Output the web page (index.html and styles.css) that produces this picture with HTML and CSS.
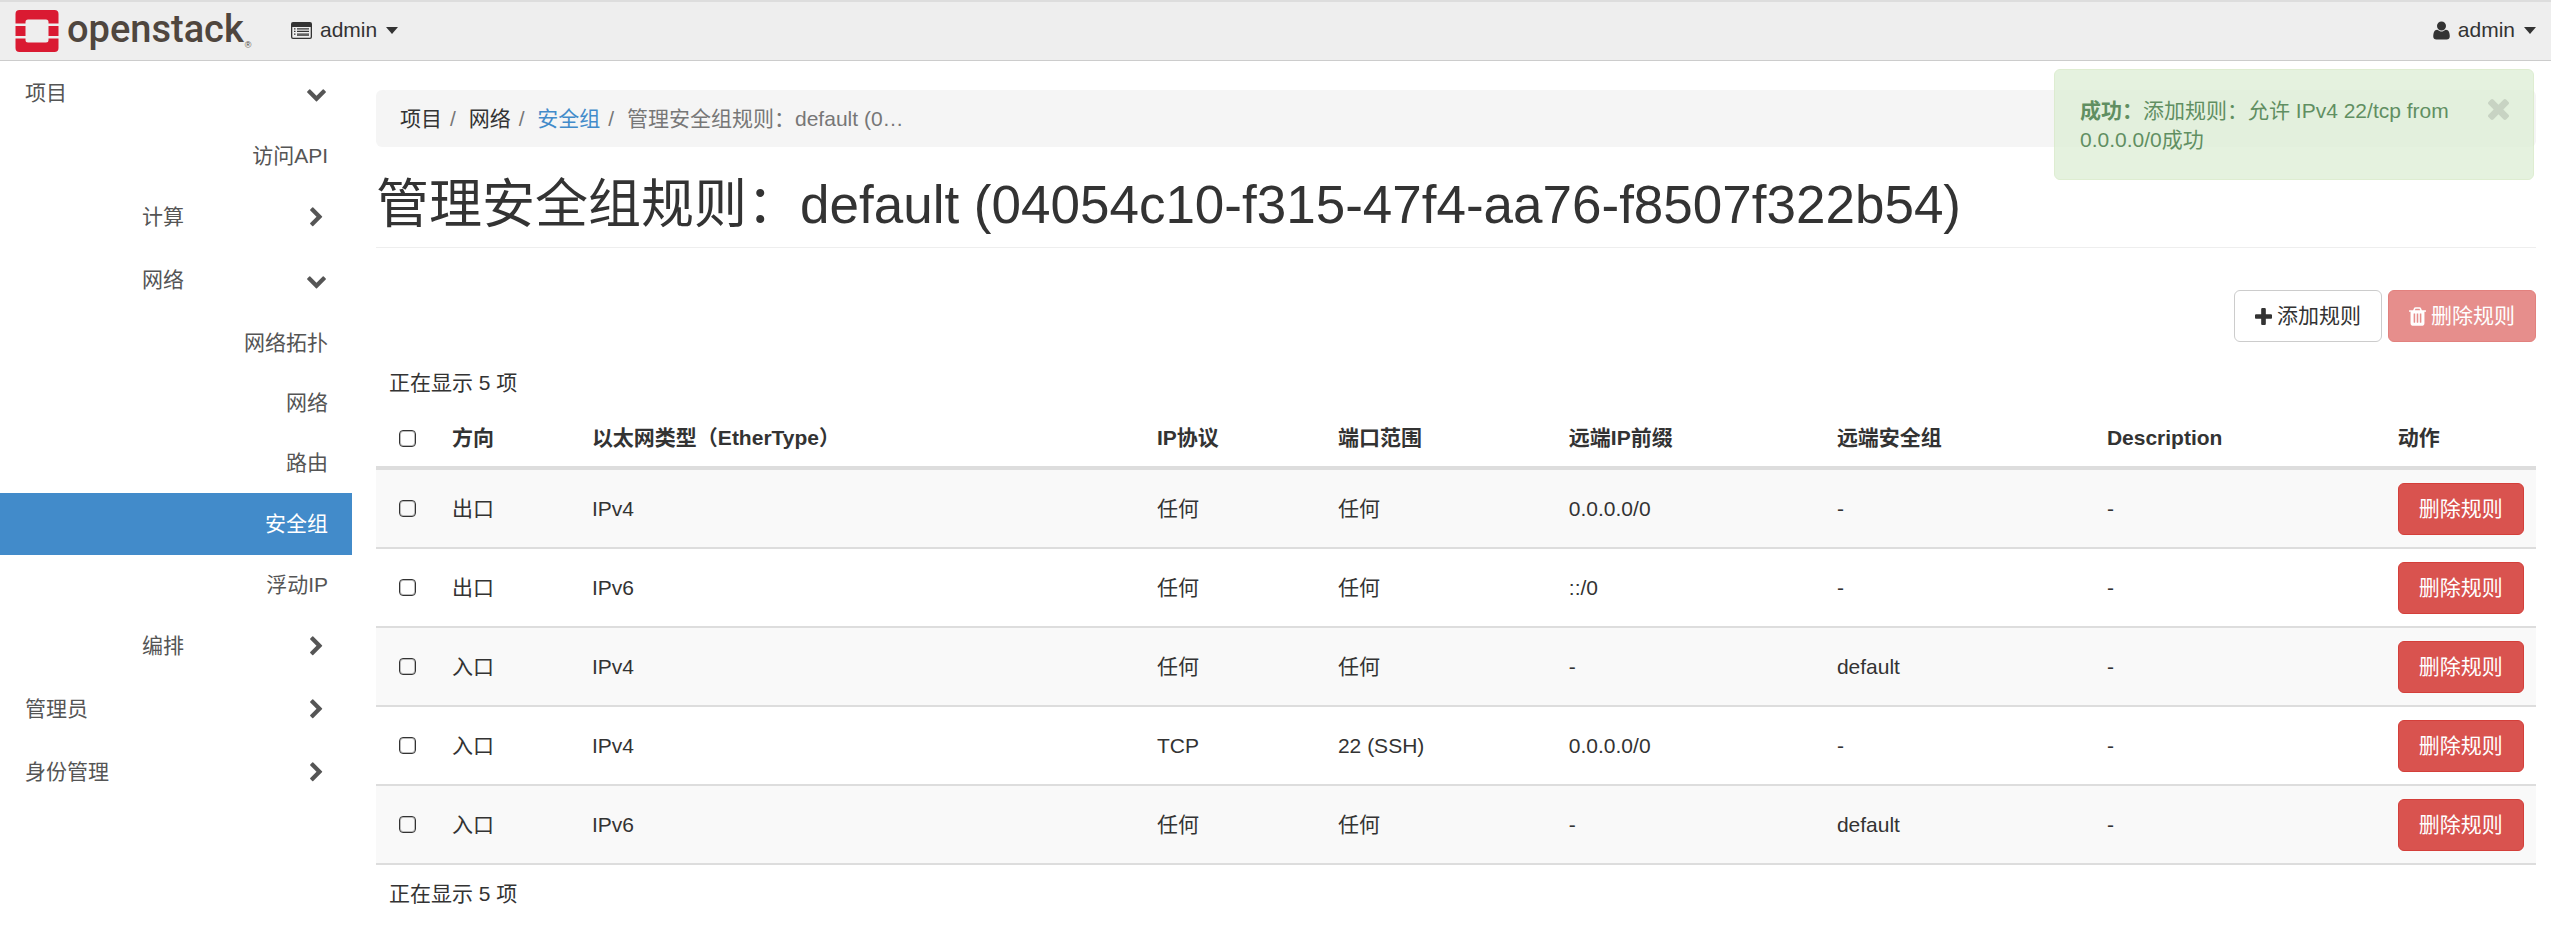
FILE: index.html
```
<!DOCTYPE html>
<html lang="zh-CN">
<head>
<meta charset="utf-8">
<title>管理安全组规则 - OpenStack Dashboard</title>
<link rel="stylesheet" href="styles.css">
</head>
<body>
<svg class="defs" aria-hidden="true">
  <symbol id="down" viewBox="0 0 1792 1792"><path d="M1683 808l-742 741q-19 19-45 19t-45-19l-742-741q-19-19-19-45.500t19-45.500l166-165q19-19 45-19t45 19l531 531 531-531q19-19 45-19t45 19l166 165q19 19 19 45.500t-19 45.500z"/></symbol>
  <symbol id="right" viewBox="0 0 1792 1792"><path d="M1363 877l-742 742q-19 19-45 19t-45-19l-166-166q-19-19-19-45t19-45l531-531-531-531q-19-19-19-45t19-45l166-166q19-19 45-19t45 19l742 742q19 19 19 45t-19 45z"/></symbol>
  <symbol id="user" viewBox="192 0 1408 1792"><path d="M1600 1405q0 120-73 189.500t-194 69.500h-874q-121 0-194-69.500t-73-189.500q0-53 3.500-103.500t14-109 26.500-108.500 43-97.500 62-81 85.500-53.500 111.500-20q9 0 42 21.500t74.500 48 108 48 133.500 21.500 133.500-21.500 108-48 74.500-48 42-21.500q61 0 111.500 20t85.500 53.500 62 81 43 97.500 26.500 108.500 14 109 3.500 103.500zm-320-893q0 159-112.500 271.500t-271.500 112.500-271.500-112.500-112.500-271.500 112.500-271.500 271.500-112.500 271.500 112.500 112.500 271.500z"/></symbol>
  <symbol id="plus" viewBox="192 128 1408 1408"><path d="M1600 736v192q0 40-28 68t-68 28h-416v416q0 40-28 68t-68 28h-192q-40 0-68-28t-28-68v-416h-416q-40 0-68-28t-28-68v-192q0-40 28-68t68-28h416v-416q0-40 28-68t68-28h192q40 0 68 28t28 68v416h416q40 0 68 28t28 68z"/></symbol>
  <symbol id="times" viewBox="302 366 1188 1188"><path d="M1490 1322q0 40-28 68l-136 136q-28 28-68 28t-68-28l-294-294-294 294q-28 28-68 28t-68-28l-136-136q-28-28-28-68t28-68l294-294-294-294q-28-28-28-68t28-68l136-136q28-28 68-28t68 28l294 294 294-294q28-28 68-28t68 28l136 136q28 28 28 68t-28 68l-294 294 294 294q28 28 28 68z"/></symbol>
  <symbol id="trash" viewBox="192 128 1408 1536"><path d="M704 1376v-704q0-14-9-23t-23-9h-64q-14 0-23 9t-9 23v704q0 14 9 23t23 9h64q14 0 23-9t9-23zm256 0v-704q0-14-9-23t-23-9h-64q-14 0-23 9t-9 23v704q0 14 9 23t23 9h64q14 0 23-9t9-23zm256 0v-704q0-14-9-23t-23-9h-64q-14 0-23 9t-9 23v704q0 14 9 23t23 9h64q14 0 23-9t9-23zm-544-992h448l-48-117q-7-9-17-11h-317q-10 2-17 11zm928 32v64q0 14-9 23t-23 9h-96v948q0 83-47 143.500t-113 60.500h-832q-66 0-113-58.500t-47-141.500v-952h-96q-14 0-23-9t-9-23v-64q0-14 9-23t23-9h309l70-167q15-37 54-63t79-26h320q40 0 79 26t54 63l70 167h309q14 0 23 9t9 23z"/></symbol>
  <symbol id="caret" viewBox="0 0 12 7"><path d="M0 0H12L6 7Z"/></symbol>
  <symbol id="list" viewBox="0 0 21 17"><path fill-rule="evenodd" d="M2 0H19Q21 0 21 2V15Q21 17 19 17H2Q0 17 0 15V2Q0 0 2 0ZM1.300 5V15Q1.300 15.700 2 15.700H19Q19.700 15.700 19.700 15V5ZM3 6.200H4.500V7.500H3ZM3 8.800H4.500V10.100H3ZM3 11.400H4.500V12.700H3ZM6 6.200H18V7.500H6ZM6 8.800H18V10.100H6ZM6 11.400H18V12.700H6ZM6 13.300H18V14H6Z"/></symbol>
</svg>

<header class="topbar">
  <a class="brand" href="#" aria-label="openstack">
    <svg class="mark" viewBox="0 0 43 42" aria-hidden="true">
      <path d="M4 0H39Q43 0 43 4V13.500H33V12Q33 9.500 30.500 9.500H12.500Q10 9.500 10 12V13.500H0V4Q0 0 4 0ZM0 16H10V26H0ZM33 16H43V26H33ZM0 28.500H10V30Q10 32.500 12.500 32.500H30.500Q33 32.500 33 30V28.500H43V38Q43 42 39 42H4Q0 42 0 38Z"/>
    </svg>
    <span class="wordmark">openstack</span><span class="reg">®</span>
  </a>
  <button class="menu" type="button"><svg class="i-list"><use href="#list"/></svg>admin<svg class="i-caret"><use href="#caret"/></svg></button>
  <button class="menu account" type="button"><svg class="i-user"><use href="#user"/></svg>admin<svg class="i-caret"><use href="#caret"/></svg></button>
</header>

<div class="layout">
  <nav class="sidebar">
    <a class="group" href="#">项目<svg><use href="#down"/></svg></a>
    <div class="items">
      <a class="item" href="#">访问API</a>
    </div>
    <a class="group sub" href="#">计算<svg><use href="#right"/></svg></a>
    <a class="group sub" href="#">网络<svg><use href="#down"/></svg></a>
    <div class="items">
      <a class="item" href="#">网络拓扑</a>
      <a class="item" href="#">网络</a>
      <a class="item" href="#">路由</a>
      <a class="item active" href="#">安全组</a>
      <a class="item" href="#">浮动IP</a>
    </div>
    <a class="group sub" href="#">编排<svg><use href="#right"/></svg></a>
    <a class="group" href="#">管理员<svg><use href="#right"/></svg></a>
    <a class="group" href="#">身份管理<svg><use href="#right"/></svg></a>
  </nav>

  <main class="content">
    <ol class="breadcrumb">
      <li>项目</li>
      <li>网络</li>
      <li><a href="#">安全组</a></li>
      <li class="current">管理安全组规则：default (0…</li>
    </ol>
    <h1 class="title">管理安全组规则：default (04054c10-f315-47f4-aa76-f8507f322b54)</h1>
    <div class="actions">
      <button class="btn" type="button"><svg class="i-plus"><use href="#plus"/></svg>添加规则</button>
      <button class="btn danger" type="button" disabled><svg class="i-trash"><use href="#trash"/></svg>删除规则</button>
    </div>
    <p class="count">正在显示 5 项</p>
    <table class="rules">
      <colgroup><col class="c1"><col class="c2"><col class="c3"><col class="c4"><col class="c5"><col class="c6"><col class="c7"><col class="c8"><col class="c9"></colgroup>
      <thead>
        <tr><th><input type="checkbox" aria-label="全选"></th><th>方向</th><th>以太网类型（EtherType）</th><th>IP协议</th><th>端口范围</th><th>远端IP前缀</th><th>远端安全组</th><th>Description</th><th>动作</th></tr>
      </thead>
      <tbody>
        <tr><td><input type="checkbox" aria-label="规则 1"></td><td>出口</td><td>IPv4</td><td>任何</td><td>任何</td><td>0.0.0.0/0</td><td>-</td><td>-</td><td><button class="btn danger" type="button">删除规则</button></td></tr>
        <tr><td><input type="checkbox" aria-label="规则 2"></td><td>出口</td><td>IPv6</td><td>任何</td><td>任何</td><td>::/0</td><td>-</td><td>-</td><td><button class="btn danger" type="button">删除规则</button></td></tr>
        <tr><td><input type="checkbox" aria-label="规则 3"></td><td>入口</td><td>IPv4</td><td>任何</td><td>任何</td><td>-</td><td>default</td><td>-</td><td><button class="btn danger" type="button">删除规则</button></td></tr>
        <tr><td><input type="checkbox" aria-label="规则 4"></td><td>入口</td><td>IPv4</td><td>TCP</td><td>22 (SSH)</td><td>0.0.0.0/0</td><td>-</td><td>-</td><td><button class="btn danger" type="button">删除规则</button></td></tr>
        <tr><td><input type="checkbox" aria-label="规则 5"></td><td>入口</td><td>IPv6</td><td>任何</td><td>任何</td><td>-</td><td>default</td><td>-</td><td><button class="btn danger" type="button">删除规则</button></td></tr>
      </tbody>
    </table>
    <p class="count foot">正在显示 5 项</p>
  </main>
</div>

<div class="alert" role="status">
  <p><strong>成功：</strong>添加规则：允许 IPv4 22/tcp from 0.0.0.0/0成功</p>
  <button class="close" type="button" aria-label="关闭"><svg><use href="#times"/></svg></button>
</div>
</body>
</html>
```
FILE: styles.css
```
* { box-sizing: border-box; }
body {
  margin: 0;
  position: relative;
  background: #fff;
  color: #333;
  font: 21px/30px "Liberation Sans", "Noto Sans CJK SC", sans-serif;
}
a { color: inherit; text-decoration: none; }
button { font: inherit; color: inherit; cursor: pointer; }
svg { fill: currentColor; flex: none; }
.defs { display: none; }

.topbar {
  display: flex;
  align-items: center;
  height: 61px;
  padding: 0 15px;
  background: #eee;
  border-top: 2px solid #ddd;
  border-bottom: 1px solid #ccc;
}
.brand { display: flex; align-items: center; width: 236px; color: #4f463e; }
.mark { width: 44px; height: 42px; fill: #da1a32; }
.wordmark {
  margin: 0 1px 4px 8px;
  font: 500 38px/48px Roboto, "Liberation Sans", sans-serif;
}
.reg { align-self: flex-end; font-size: 9px; line-height: 24px; }
.menu {
  display: flex;
  align-items: center;
  margin-left: 40px;
  padding: 0 0 2px;
  border: 0;
  background: none;
}
.account { margin-left: auto; }
.i-list { width: 21px; height: 17px; margin-right: 8px; }
.i-user { width: 17px; height: 21px; margin-right: 8px; }
.i-caret { width: 12px; height: 7px; margin-left: 9px; }

.layout { display: flex; align-items: flex-start; }
.sidebar { flex: none; width: 352px; padding-top: 1px; color: #555; }
.group {
  display: flex;
  align-items: center;
  justify-content: space-between;
  height: 62px;
  margin-bottom: 1px;
  padding: 0 25px;
}
.group svg { width: 21px; height: 21px; }
.sub { padding-left: 142px; }
.items { padding-top: 1px; }
.item {
  display: block;
  padding: 15px 24px;
  text-align: right;
}
.active { padding: 16px 24px; background: #428bca; color: #fff; }

.content { flex: 1; min-width: 0; padding: 29px 15px 0 24px; }
.breadcrumb {
  display: flex;
  margin: 0;
  padding: 14px 24px 13px;
  list-style: none;
  background: #f5f5f5;
  border-radius: 6px;
}
.breadcrumb li + li::before { content: "/\00a0"; padding: 0 7px 0 8px; color: #777; }
.breadcrumb a { color: #428bca; }
.breadcrumb .current { color: #777; }
.title {
  margin: 29px 0 0;
  padding-bottom: 14px;
  border-bottom: 1px solid #eee;
  font-size: 53px;
  line-height: 57px;
  font-weight: 400;
}
.actions { display: flex; justify-content: flex-end; gap: 6px; margin-top: 42px; }
.btn {
  display: inline-flex;
  align-items: center;
  gap: 5px;
  padding: 10px 20px;
  background: #fff;
  border: 1px solid #ccc;
  border-radius: 6px;
  white-space: nowrap;
}
.danger { background: #d9534f; border-color: #d43f3a; color: #fff; }
.btn:disabled { opacity: .65; }
.i-plus { width: 17px; height: 17px; }
.i-trash { width: 17px; height: 19px; }
.count { margin: 0; padding: 26px 13px 12px; }
.foot { padding-top: 14px; }

.rules { width: 100%; table-layout: fixed; border-collapse: separate; border-spacing: 0; }
.rules th, .rules td { padding: 12px; text-align: left; vertical-align: middle; }
.rules th { padding: 13px 12px; border-bottom: 4px solid #ddd; font-weight: 700; white-space: nowrap; }
.rules td { border-bottom: 2px solid #ddd; height: 79px; }
.rules tbody tr:nth-child(odd) { background: #f9f9f9; }
.rules .btn { display: flex; }
.rules input {
  appearance: none;
  display: block;
  width: 17px;
  height: 17px;
  margin: 0 11px;
  border: 1px solid #333;
  border-radius: 4px;
  box-shadow: inset 0 0 0 1px #bbb;
}
.c1 { width: 2.96%; }
.c2 { width: 6.48%; }
.c3 { width: 26.16%; }
.c4 { width: 8.38%; }
.c5 { width: 10.69%; }
.c6 { width: 12.41%; }
.c7 { width: 12.5%; }
.c8 { width: 13.47%; }
.c9 { width: 6.95%; }

.alert {
  position: absolute;
  top: 69px;
  right: 17px;
  width: 480px;
  display: flex;
  align-items: flex-start;
  justify-content: space-between;
  padding: 26px 24px 25px 25px;
  background: #dff0d8;
  border: 1px solid #d6e9c6;
  border-radius: 6px;
  color: #3c763d;
  line-height: 29px;
  opacity: .8;
}
.alert p { width: 380px; margin: 0; }
.close { display: flex; margin-top: 3px; padding: 0; border: 0; background: none; color: #000; opacity: .15; }
.close svg { width: 21px; height: 21px; }
```
